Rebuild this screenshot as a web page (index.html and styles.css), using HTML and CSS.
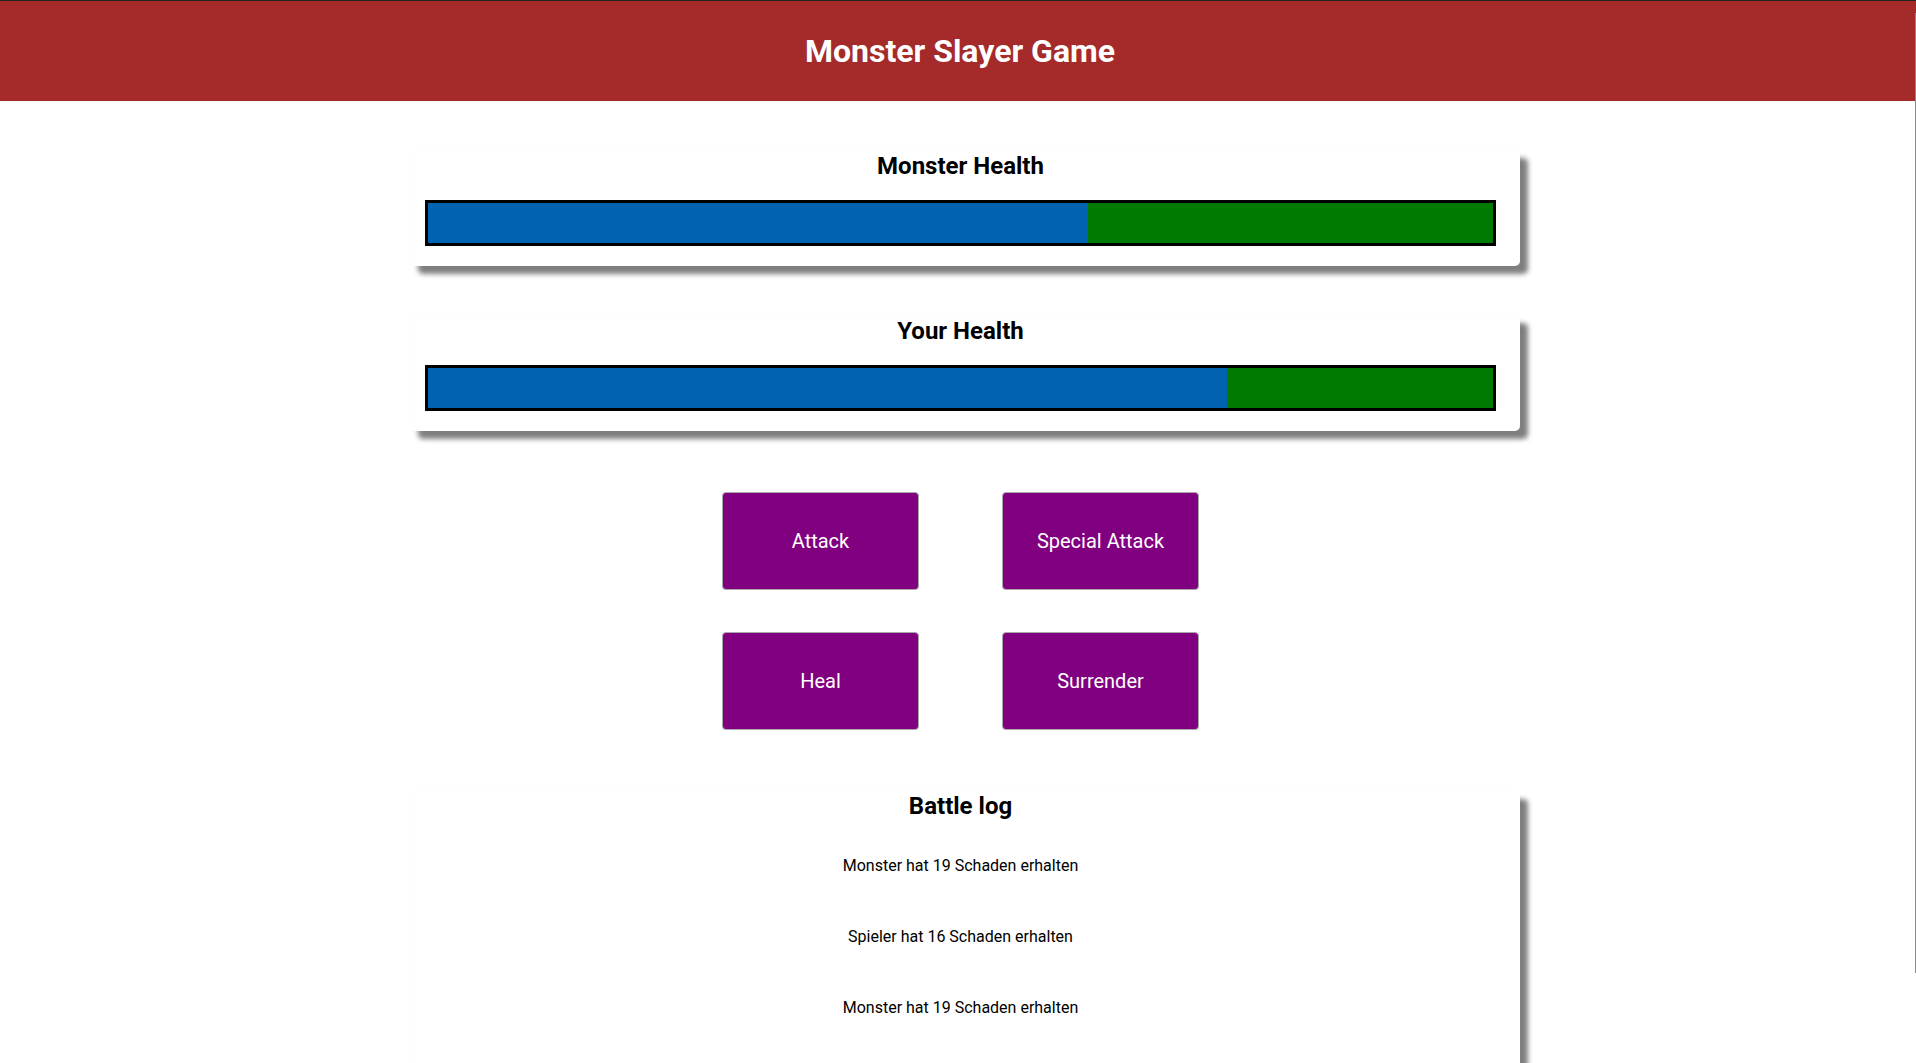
FILE: index.html
```html
<!DOCTYPE html>
<html lang="de">
<head>
<meta charset="utf-8">
<title>Monster Slayer Game</title>
<link rel="stylesheet" href="styles.css">
</head>
<body>
<header class="app-header">
  <h1 class="app-title">Monster Slayer Game</h1>
</header>
<main class="game">
  <section class="card health-card">
    <h2 class="card-title">Monster Health</h2>
    <div class="healthbar">
      <div class="healthbar-fill" style="width: 62%"></div>
      <div class="healthbar-value"></div>
    </div>
  </section>
  <section class="card health-card">
    <h2 class="card-title">Your Health</h2>
    <div class="healthbar">
      <div class="healthbar-fill" style="width: 75%"></div>
      <div class="healthbar-value"></div>
    </div>
  </section>
  <section class="controls">
    <button class="action-btn">Attack</button>
    <button class="action-btn">Special Attack</button>
    <button class="action-btn">Heal</button>
    <button class="action-btn">Surrender</button>
  </section>
  <section class="card log-card">
    <h2 class="card-title log-title">Battle log</h2>
    <ul class="log-list">
      <li class="log-item">Monster hat 19 Schaden erhalten</li>
      <li class="log-item">Spieler hat 16 Schaden erhalten</li>
      <li class="log-item">Monster hat 19 Schaden erhalten</li>
    </ul>
  </section>
</main>
<div class="scroll-thumb"></div>
</body>
</html>
```
FILE: styles.css
```css
* { box-sizing: border-box; }

html, body {
  margin: 0;
  padding: 0;
  background: #ffffff;
  font-family: Roboto, "Liberation Sans", Arial, sans-serif;
  color: #000;
}

.app-header {
  height: 101px;
  background: #a52a2a;
  border-top: 1px solid #23261f;
  display: flex;
  align-items: center;
  justify-content: center;
  padding-left: 4px;
}

.app-title {
  margin: 0;
  color: #ffffff;
  font-size: 32px;
  font-weight: 700;
  line-height: 38px;
}

.game {
  width: 1110px;
  margin: 49px 0 0 calc(50% - 548px);
  display: flex;
  flex-direction: column;
}

.card {
  background: #fff;
  border-radius: 5px;
  box-shadow: 8px 8px 5px rgba(0, 0, 0, 0.5), 0 0 2px rgba(0, 0, 0, 0.04);
  padding: 2px 24px 20px 15px;
}

.health-card + .health-card { margin-top: 49px; }

.card-title {
  margin: 0;
  text-align: center;
  font-size: 24px;
  font-weight: 700;
  line-height: 28px;
}

.healthbar {
  margin-top: 20px;
  height: 46px;
  border: 3px solid #000;
  display: flex;
}

.healthbar-fill {
  background: #0062b1;
  height: 100%;
}

.healthbar-value {
  flex: 1;
  background: #007a00;
  height: 100%;
}

.controls {
  margin-top: 61px;
  display: grid;
  grid-template-columns: 197px 197px;
  column-gap: 83px;
  row-gap: 42px;
  justify-content: center;
  padding-right: 9px;
}

.action-btn {
  width: 197px;
  height: 98px;
  background: #800080;
  color: #fff;
  border: 1px solid #a9a9a9;
  border-radius: 4px;
  font-family: Roboto, "Liberation Sans", Arial, sans-serif;
  font-size: 20px;
  font-weight: 400;
  cursor: pointer;
}

.log-card {
  margin-top: 61px;
  padding-top: 1px;
  padding-bottom: 60px;
}

.log-title { margin-bottom: 10px; }

.log-list {
  list-style: none;
  margin: 0;
  padding: 0;
}

.log-item {
  text-align: center;
  font-size: 16px;
  line-height: 19px;
  padding: 26px 0;
}

.scroll-thumb {
  position: fixed;
  right: 0;
  top: 13px;
  width: 1px;
  height: 960px;
  background: #8a8a8a;
}
```
